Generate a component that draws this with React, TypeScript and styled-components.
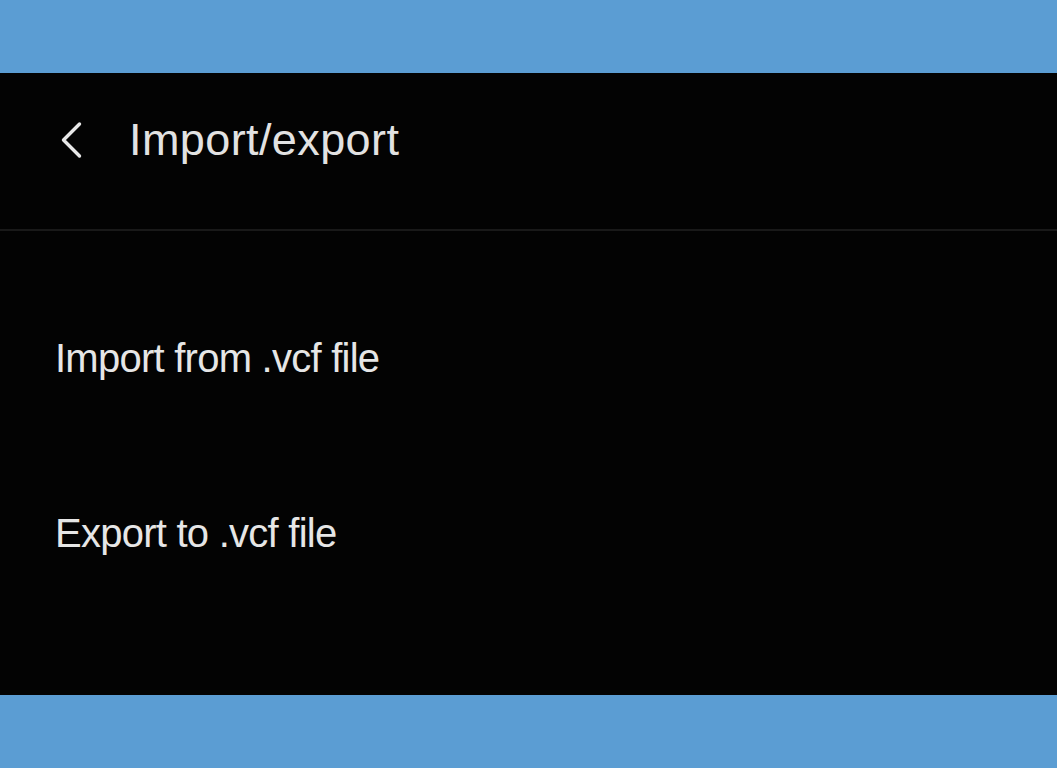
import React from "react";
import styled, { createGlobalStyle } from "styled-components";

const Global = createGlobalStyle`
  html, body { margin: 0; padding: 0; background: #5b9dd3; }
  body { font-family: "Liberation Sans", Arial, sans-serif; }
`;

const Page = styled.div`
  width: 1057px;
  height: 768px;
  display: flex;
  flex-direction: column;
  background: #5b9dd3;
`;

const Band = styled.div<{ $h: number }>`
  height: ${(p) => p.$h}px;
  flex: none;
  background: #5b9dd3;
`;

const Screen = styled.div`
  height: 622px;
  flex: none;
  background: #030303;
  display: flex;
  flex-direction: column;
`;

const Header = styled.div`
  height: 156px;
  display: flex;
  align-items: center;
  padding-left: 57px;
  padding-bottom: 22px;
  gap: 44px;
  box-sizing: border-box;
`;

const Title = styled.h1`
  margin: 0;
  font-weight: 400;
  font-size: 45px;
  color: #e2e2e2;
  letter-spacing: 0.4px;
`;

const Divider = styled.div`
  height: 2px;
  background: #191919;
`;

const List = styled.div`
  display: flex;
  flex-direction: column;
  padding-top: 40px;
`;

const Item = styled.div`
  height: 175px;
  display: flex;
  align-items: center;
  padding-left: 55px;
  font-size: 40px;
  letter-spacing: -0.75px;
  color: #e6e6e6;
`;

const BackIcon = () => (
  <svg width="28" height="40" viewBox="0 0 28 40" fill="none">
    <path d="M22.5 4 L6.5 20 L22.5 36" stroke="#e8e8e8" strokeWidth="3.4" strokeLinecap="round" strokeLinejoin="round" />
  </svg>
);

export default function App() {
  return (
    <>
      <Global />
      <Page>
        <Band $h={73} />
        <Screen>
          <Header>
            <BackIcon />
            <Title>Import/export</Title>
          </Header>
          <Divider />
          <List>
            <Item>Import from .vcf file</Item>
            <Item>Export to .vcf file</Item>
          </List>
        </Screen>
        <Band $h={73} />
      </Page>
    </>
  );
}
